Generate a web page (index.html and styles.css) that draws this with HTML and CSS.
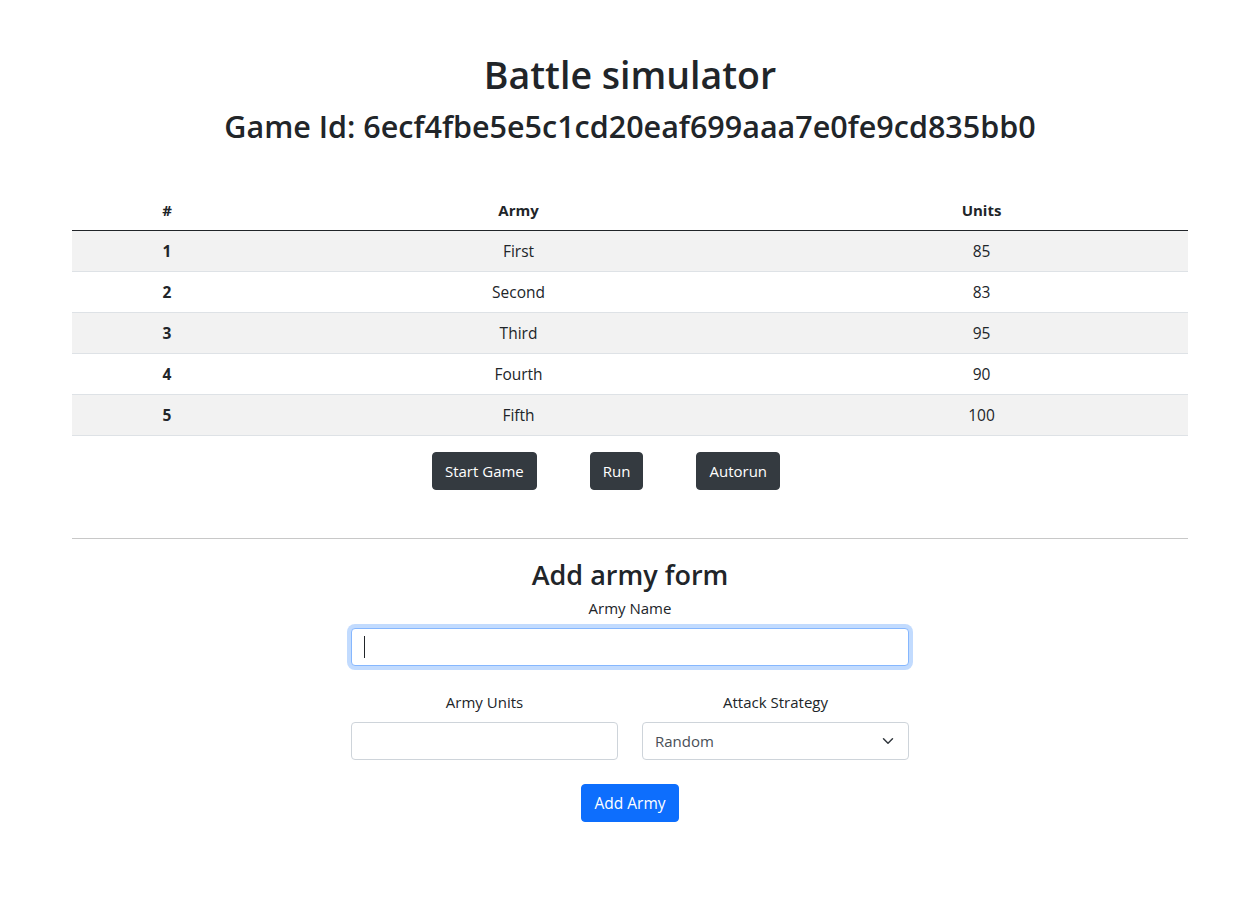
FILE: index.html
```html
<!DOCTYPE html>
<html lang="en">
<head>
<meta charset="utf-8">
<title>Battle simulator</title>
<link rel="stylesheet" href="styles.css">
</head>
<body>
<div class="container">
  <header class="title-block">
    <h1 class="title">Battle simulator</h1>
    <h2 class="subtitle">Game Id: 6ecf4fbe5e5c1cd20eaf699aaa7e0fe9cd835bb0</h2>
  </header>

  <table class="armies">
    <colgroup>
      <col class="col-num">
      <col class="col-army">
      <col class="col-units">
    </colgroup>
    <thead>
      <tr><th>#</th><th>Army</th><th>Units</th></tr>
    </thead>
    <tbody>
      <tr><th>1</th><td>First</td><td>85</td></tr>
      <tr><th>2</th><td>Second</td><td>83</td></tr>
      <tr><th>3</th><td>Third</td><td>95</td></tr>
      <tr><th>4</th><td>Fourth</td><td>90</td></tr>
      <tr><th>5</th><td>Fifth</td><td>100</td></tr>
    </tbody>
  </table>

  <div class="actions">
    <button class="btn btn-dark" type="button">Start Game</button>
    <button class="btn btn-dark" type="button">Run</button>
    <button class="btn btn-dark" type="button">Autorun</button>
  </div>

  <hr class="divider">

  <form class="army-form">
    <h3 class="form-title">Add army form</h3>
    <div class="field field-name">
      <label class="form-label" for="armyName">Army Name</label>
      <div class="caret-wrap">
        <input class="form-control is-focused" id="armyName" type="text">
      </div>
    </div>
    <div class="form-row">
      <div class="field">
        <label class="form-label" for="armyUnits">Army Units</label>
        <input class="form-control" id="armyUnits" type="number">
      </div>
      <div class="field">
        <label class="form-label" for="strategy">Attack Strategy</label>
        <select class="form-select" id="strategy">
          <option>Random</option>
          <option>Weakest</option>
          <option>Strongest</option>
        </select>
      </div>
    </div>
    <div class="submit-row">
      <button class="btn btn-primary btn-submit" type="button">Add Army</button>
    </div>
  </form>
</div>
</body>
</html>
```

FILE: styles.css
```css
* { box-sizing: border-box; }

html, body {
  margin: 0;
  background: #fff;
}

body {
  font-family: "Open Sans", "Noto Sans", "Liberation Sans", sans-serif;
  font-size: 16px;
  line-height: 1.5;
  color: #212529;
}

.container {
  max-width: 1140px;
  margin: 0 auto;
  padding: 51px 12px 40px;
}

.title-block {
  text-align: center;
}

.title {
  font-size: 37.5px;
  font-weight: 600;
  line-height: 48px;
  margin: 0 0 8px;
}

.subtitle {
  font-size: 30.5px;
  font-weight: 600;
  line-height: 38px;
  margin: 0 0 8px;
}

.armies {
  width: 100%;
  margin-top: 45px;
  border-collapse: collapse;
  text-align: center;
}

.col-num { width: 190px; }
.col-army { width: 513px; }
.col-units { width: 413px; }

.armies th,
.armies td {
  padding: 8px;
  line-height: 24px;
  font-size: 15.5px;
  border-bottom: 1px solid #dee2e6;
}

.armies thead th {
  font-weight: 700;
  font-size: 15px;
  border-bottom: 1px solid #212529;
}

.armies tbody th {
  font-weight: 700;
}

.armies tbody tr:nth-child(odd) {
  background: #f2f2f2;
}

.actions {
  display: flex;
  justify-content: center;
  gap: 53px;
  padding-right: 48px;
  margin-top: 16px;
}

.btn {
  font-family: inherit;
  font-size: 15px;
  line-height: 24px;
  padding: 6px 12px;
  border-radius: 4px;
  border: 1px solid transparent;
  cursor: pointer;
}

.btn-dark {
  background: #343a40;
  border-color: #343a40;
  color: #fff;
}

.btn-primary {
  background: #0d6efd;
  border-color: #0d6efd;
  color: #fff;
}

.btn-submit {
  font-size: 15.5px;
}

.divider {
  margin: 48px 0 19px;
  border: 0;
  border-top: 1px solid #c8c8c8;
  height: 0;
}

.army-form {
  width: 558px;
  margin: 0 auto;
  text-align: center;
}

.form-title {
  font-size: 27px;
  font-weight: 600;
  line-height: 34px;
  margin: 0 0 4px;
}

.form-label {
  display: block;
  font-size: 15px;
  line-height: 24px;
  margin-bottom: 8px;
}

.form-control,
.form-select {
  display: block;
  width: 100%;
  height: 38px;
  padding: 6px 12px;
  font-family: inherit;
  font-size: 16px;
  line-height: 24px;
  color: #212529;
  background-color: #fff;
  border: 1px solid #ced4da;
  border-radius: 4px;
}

.form-control.is-focused {
  border-color: #86b7fe;
  box-shadow: 0 0 0 4px rgba(13, 110, 253, 0.25);
  outline: 0;
}

.caret-wrap {
  position: relative;
}

.caret-wrap::after {
  content: "";
  position: absolute;
  left: 13px;
  top: 8px;
  width: 1px;
  height: 22px;
  background: #212529;
}

.field-name {
  margin-bottom: 24px;
}

.form-row {
  display: grid;
  grid-template-columns: 1fr 1fr;
  gap: 24px;
}

.form-select {
  appearance: none;
  -webkit-appearance: none;
  font-size: 15px;
  color: #495057;
  text-align: left;
  padding-right: 36px;
  background-image: url("data:image/svg+xml,%3csvg xmlns='http://www.w3.org/2000/svg' viewBox='0 0 16 16'%3e%3cpath fill='none' stroke='%23343a40' stroke-linecap='round' stroke-linejoin='round' stroke-width='2' d='M2 5l6 6 6-6'/%3e%3c/svg%3e");
  background-repeat: no-repeat;
  background-position: right 12px center;
  background-size: 16px 12px;
}

.submit-row {
  display: flex;
  justify-content: center;
  margin-top: 24px;
}
```
